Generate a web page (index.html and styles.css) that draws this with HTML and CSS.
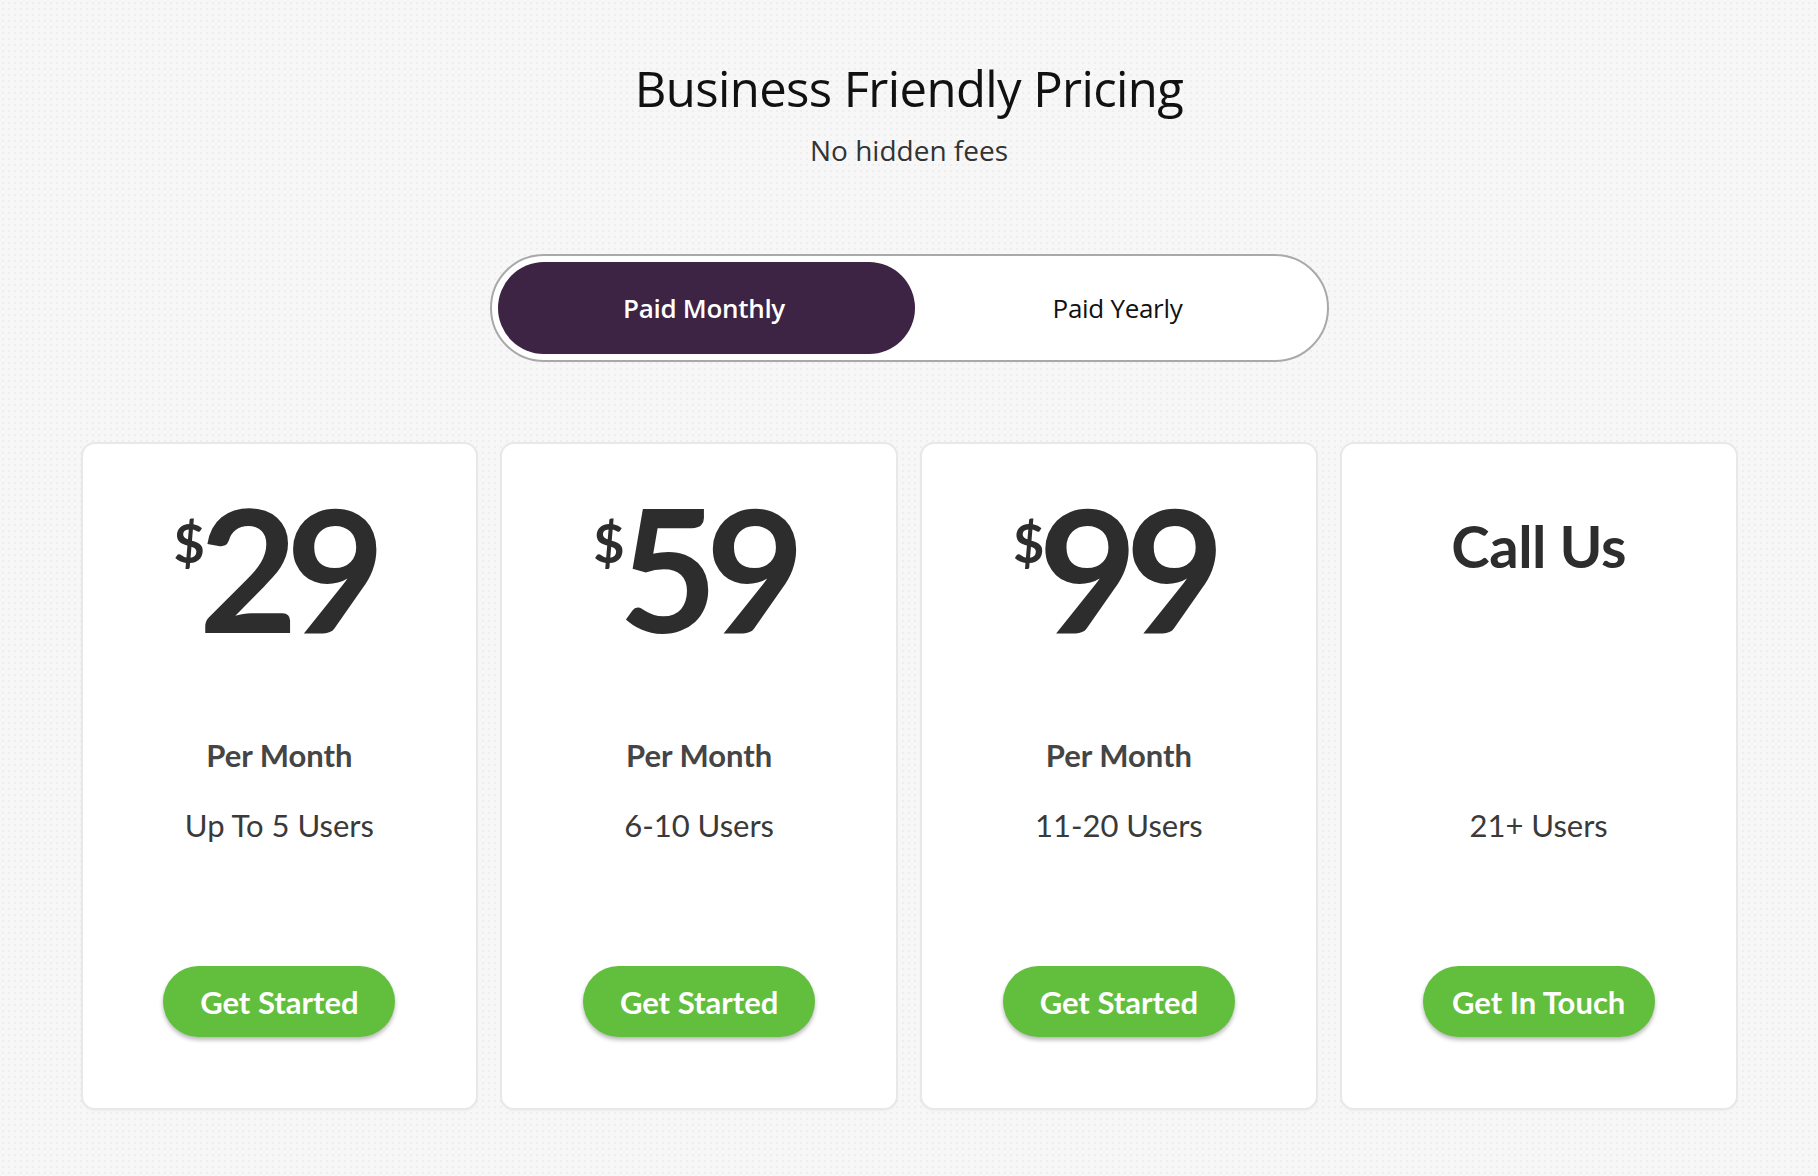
FILE: index.html
```html
<!DOCTYPE html>
<html lang="en">
<head>
<meta charset="utf-8">
<title>Business Friendly Pricing</title>
<link rel="stylesheet" href="styles.css">
</head>
<body>
<main class="page">
  <header class="intro">
    <h1 class="title">Business Friendly Pricing</h1>
    <p class="subtitle">No hidden fees</p>
  </header>

  <div class="toggle">
    <button class="toggle-opt is-active" type="button">Paid Monthly</button>
    <button class="toggle-opt" type="button">Paid Yearly</button>
  </div>

  <section class="plans">
    <article class="card">
      <div class="price"><span class="currency">$</span><span class="amount">29</span></div>
      <p class="period">Per Month</p>
      <p class="users">Up To 5 Users</p>
      <a class="cta" href="#">Get Started</a>
    </article>
    <article class="card">
      <div class="price"><span class="currency">$</span><span class="amount">59</span></div>
      <p class="period">Per Month</p>
      <p class="users">6-10 Users</p>
      <a class="cta" href="#">Get Started</a>
    </article>
    <article class="card">
      <div class="price"><span class="currency">$</span><span class="amount">99</span></div>
      <p class="period">Per Month</p>
      <p class="users">11-20 Users</p>
      <a class="cta" href="#">Get Started</a>
    </article>
    <article class="card">
      <div class="price"><span class="call">Call Us</span></div>
      <p class="period is-hidden">Per Month</p>
      <p class="users">21+ Users</p>
      <a class="cta" href="#">Get In Touch</a>
    </article>
  </section>
</main>
</body>
</html>
```

FILE: styles.css
```css
* { box-sizing: border-box; }

html, body {
  margin: 0;
  padding: 0;
}

body {
  min-height: 1176px;
  background-color: #f7f7f7;
  background-image: radial-gradient(circle, #eeeeee 1px, transparent 1.6px);
  background-size: 6px 6px;
  font-family: "Open Sans", "Liberation Sans", sans-serif;
  color: #222;
}

.page {
  display: flex;
  flex-direction: column;
  align-items: center;
  padding-top: 58px;
}

.intro {
  text-align: center;
}

.title {
  margin: 0;
  font-family: "Open Sans", sans-serif;
  font-weight: 400;
  font-size: 49px;
  line-height: 60px;
  letter-spacing: -0.6px;
  color: #111;
}

.subtitle {
  margin: 15px 0 0;
  font-size: 28px;
  line-height: 34px;
  color: #333;
}

.toggle {
  margin-top: 87px;
  width: 839px;
  height: 108px;
  border: 2px solid #a9a9a9;
  border-radius: 54px;
  background: #fff;
  padding: 6px;
  display: grid;
  grid-template-columns: 417px 1fr;
}

.toggle-opt {
  border: 0;
  border-radius: 46px;
  background: transparent;
  font-family: "Open Sans", sans-serif;
  font-size: 26px;
  font-weight: 400;
  color: #111;
  letter-spacing: -0.3px;
  cursor: pointer;
}

.toggle-opt.is-active {
  background: #3d2344;
  color: #fff;
  font-weight: 600;
  padding-right: 10px;
}

.plans {
  margin-top: 80px;
  width: 1657px;
  display: grid;
  grid-template-columns: repeat(4, 1fr);
  gap: 22px;
}

.card {
  background: #fff;
  border: 2px solid #e8e8e8;
  border-radius: 14px;
  box-shadow: 0 1px 2px rgba(0, 0, 0, 0.04);
  padding: 32px 0 71px;
  display: flex;
  flex-direction: column;
  align-items: center;
  font-family: Lato, "Open Sans", sans-serif;
}

.price {
  height: 261px;
  display: flex;
  justify-content: center;
  align-items: flex-start;
  color: #2d2d2d;
}

.currency {
  margin-top: 40px;
  font-size: 54px;
  line-height: 1;
  font-weight: 700;
  letter-spacing: -6px;
}

.amount {
  margin-top: 5px;
  font-size: 171px;
  line-height: 1;
  font-weight: 700;
  letter-spacing: -12px;
  margin-right: 12px;
}

.call {
  margin-top: 41px;
  font-size: 58px;
  line-height: 1;
  font-weight: 700;
  letter-spacing: -0.5px;
}

.period {
  margin: 0;
  font-size: 31px;
  line-height: 37px;
  font-weight: 700;
  color: #454545;
}

.period.is-hidden {
  visibility: hidden;
}

.users {
  margin: 32px 0 0;
  font-size: 31px;
  line-height: 38px;
  font-weight: 400;
  color: #3a3a3a;
}

.cta {
  margin-top: 122px;
  width: 232px;
  height: 71px;
  border-radius: 36px;
  background: #62be3d;
  box-shadow: 0 3px 4px rgba(0, 0, 0, 0.28);
  color: #fff;
  text-decoration: none;
  font-size: 31px;
  font-weight: 700;
  display: flex;
  align-items: center;
  justify-content: center;
}
```
